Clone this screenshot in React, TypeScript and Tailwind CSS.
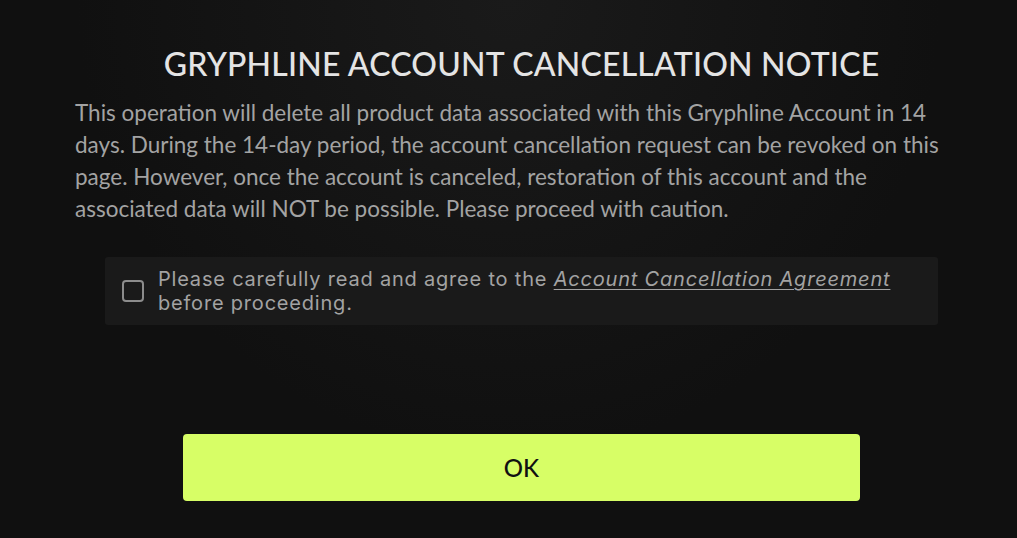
export default function App() {
  return (
    <div className="w-[1017px] h-[538px] overflow-hidden bg-[#101010] bg-[radial-gradient(ellipse_at_top,#1a1a1a_0%,#101010_60%)]">
      <div className="ml-[75px] w-[893px] pt-[44px] flex flex-col items-center">
        <h1 className="font-['Lato',sans-serif] text-[32px] leading-[40px] font-medium text-[#e4e4e4] tracking-[0.2px]">
          GRYPHLINE ACCOUNT CANCELLATION NOTICE
        </h1>
        <p className="mt-[13px] w-full font-['Lato',sans-serif] text-[22.5px] leading-[32px] text-[#a3a3a3]">
          This operation will delete all product data associated with this Gryphline Account in 14 days. During the 14-day period, the account cancellation request can be revoked on this page. However, once the account is canceled, restoration of this account and the associated data will NOT be possible. Please proceed with caution.
        </p>

        <div className="mt-[32px] w-[833px] h-[68px] rounded-[3px] bg-[#1a1a1a] flex items-center pl-[17px] pr-[20px]">
          <div className="w-[22px] h-[22px] rounded-[4px] border-2 border-[#8c8c8c] shrink-0" />
          <p className="ml-[14px] font-['Inter',sans-serif] text-[20px] leading-[24px] tracking-[0.8px] text-[#a3a3a3]">
            Please carefully read and agree to the{' '}
            <span className="italic underline underline-offset-[3px] decoration-1">Account Cancellation Agreement</span>
            <br />
            before proceeding.
          </p>
        </div>

        <button className="mt-[109px] w-[677px] h-[67px] rounded-[4px] bg-[#d7fe66] flex items-center justify-center font-['Lato',sans-serif] text-[24px] font-medium text-[#111]">
          OK
        </button>
      </div>
    </div>
  );
}
